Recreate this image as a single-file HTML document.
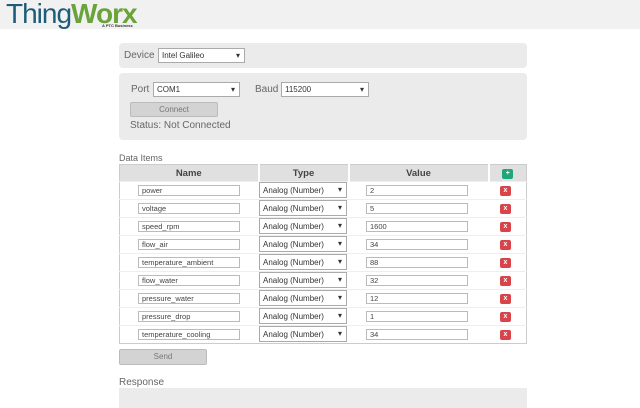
<!DOCTYPE html>
<html><head><style>
*{box-sizing:border-box;margin:0;padding:0}
body{width:640px;height:400px;overflow:hidden;background:#fff;font-family:"Liberation Sans",Arial,sans-serif;color:#555;position:relative}
.hdr{position:absolute;left:0;top:0;width:640px;height:29px;background:#f1f1f1}
.logo{position:absolute;left:6px;top:-1px;font-size:28px;letter-spacing:-1px;line-height:30px}
.logo .a{color:#1d5d79}.logo .b{color:#6aa33a;font-weight:bold}
.ptc{position:absolute;left:102px;top:23px;font-size:4px;color:#333;font-weight:bold}
.abs{position:absolute}
.panel{position:absolute;background:#ebebeb;border-radius:4px}
.sel{position:absolute;background:#fff;border:1px solid #aaa;font-size:8px;color:#333;padding:2px 3px;height:15px;line-height:9px}
.sel:after{content:"▾";position:absolute;right:4px;top:2px;font-size:8px}
.inp{position:absolute;background:#fff;border:1px solid #bbb;font-size:7.5px;color:#444;padding:1px 3px;height:11px;line-height:8px}
.btn{position:absolute;background:#d3d3d3;border:1px solid #bbb;border-radius:2px;font-size:8px;color:#777;text-align:center}
.lbl{position:absolute;font-size:10px;color:#666}
table{position:absolute;left:119px;top:164px;width:408px;border-collapse:collapse;border:1px solid #ccc}
th{background:#e0e0e0;height:17px;font-size:9.5px;color:#444;border-right:2px solid #fff}
td{height:18px;border-top:1px solid #eee;position:relative}
.x{display:inline-block;width:11px;height:10px;background:#d9444b;border-radius:2px;color:#fff;font-size:7px;line-height:10px;text-align:center;font-weight:bold}
</style></head><body>
<div class="hdr"></div>
<div class="logo"><span class="a">Thing</span><span class="b">Worx</span></div>
<div class="ptc">A PTC Business</div>

<div class="panel" style="left:119px;top:43px;width:408px;height:25px"></div>
<div class="lbl" style="left:124px;top:50px">Device</div>
<div class="sel" style="left:158px;top:48px;width:87px">Intel Galileo</div>

<div class="panel" style="left:119px;top:73px;width:408px;height:67px"></div>
<div class="lbl" style="left:131px;top:84px">Port</div>
<div class="sel" style="left:153px;top:82px;width:87px">COM1</div>
<div class="lbl" style="left:255px;top:84px">Baud</div>
<div class="sel" style="left:281px;top:82px;width:88px">115200</div>
<div class="btn" style="left:130px;top:102px;width:88px;height:15px;line-height:13px">Connect</div>
<div class="lbl" style="left:130px;top:120px">Status: Not Connected</div>

<div class="lbl" style="left:119px;top:153px;font-size:9px">Data Items</div>
<table>
<tr><th style="width:139px">Name</th><th style="width:90px">Type</th><th style="width:140px">Value</th><th style="border-right:0"><span class="x" style="background:#1fa67a">+</span></th></tr>
<tr><td></td><td></td><td></td><td></td></tr>
<tr><td></td><td></td><td></td><td></td></tr>
<tr><td></td><td></td><td></td><td></td></tr>
<tr><td></td><td></td><td></td><td></td></tr>
<tr><td></td><td></td><td></td><td></td></tr>
<tr><td></td><td></td><td></td><td></td></tr>
<tr><td></td><td></td><td></td><td></td></tr>
<tr><td></td><td></td><td></td><td></td></tr>
<tr><td></td><td></td><td></td><td></td></tr>
</table>

<div id="rows"></div>
<script>
var d=[["power","2"],["voltage","5"],["speed_rpm","1600"],["flow_air","34"],["temperature_ambient","88"],["flow_water","32"],["pressure_water","12"],["pressure_drop","1"],["temperature_cooling","34"]];
var h="";
d.forEach(function(r,i){var y=185+i*18;
h+='<div class="inp" style="left:138px;top:'+y+'px;width:102px">'+r[0]+'</div>';
h+='<div class="sel" style="left:259px;top:'+(y-3)+'px;width:88px;height:16px;padding-top:3px">Analog (Number)</div>';
h+='<div class="inp" style="left:366px;top:'+y+'px;width:102px">'+r[1]+'</div>';
h+='<span class="x abs" style="left:500px;top:'+(y+1)+'px">x</span>';});
document.getElementById("rows").innerHTML=h;
</script>

<div class="btn" style="left:119px;top:349px;width:88px;height:16px;line-height:14px">Send</div>
<div class="lbl" style="left:119px;top:377px">Response</div>
<div class="panel" style="left:119px;top:388px;width:408px;height:20px;border-radius:0"></div>
</body></html>
